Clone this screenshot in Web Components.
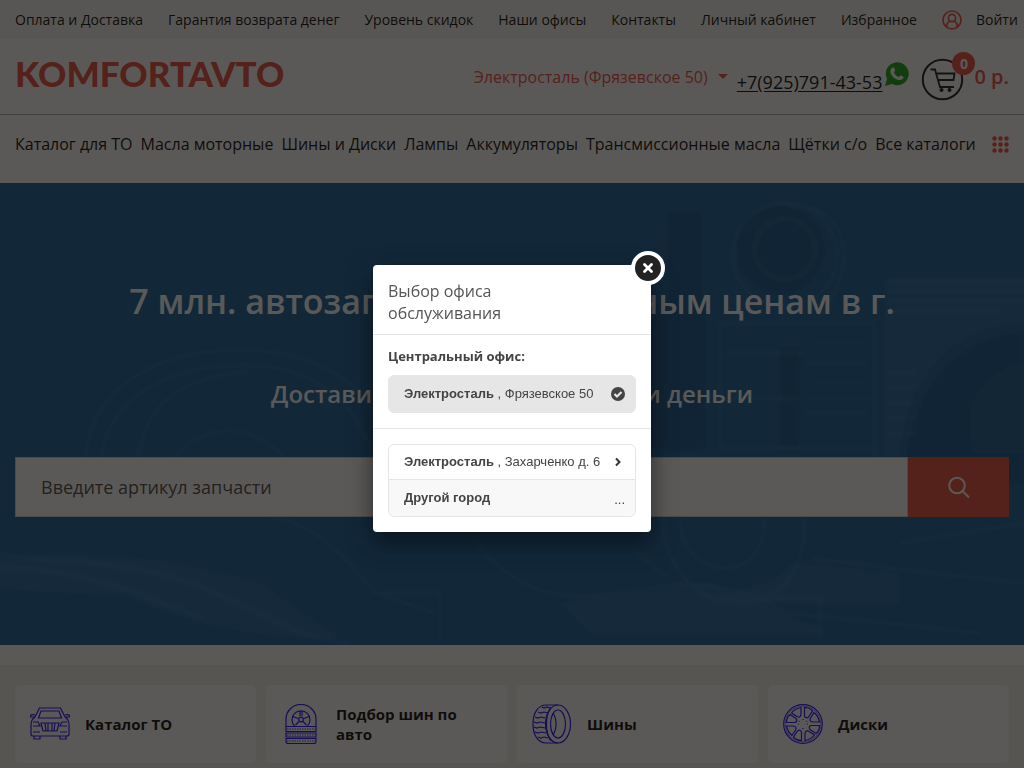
<!DOCTYPE html>
<html lang="ru">
<head>
<meta charset="utf-8">
<title>Komfortavto</title>
<style>
html, body { margin: 0; }
body { font-family: "Open Sans", "Liberation Sans", sans-serif; color: #000; background: #fff; overflow: hidden; }
</style>
</head>
<body>
<shop-page></shop-page>
<script>
const define = (name, html) => {
  const template = document.createElement('template');
  template.innerHTML = html;
  customElements.define(name, class extends HTMLElement {
    constructor() {
      super();
      this.attachShadow({ mode: 'open' }).append(template.content.cloneNode(true));
    }
  });
};

define('top-bar', `
<style>
:host { display: block; background: #f5f5f3; }
nav { display: flex; align-items: center; gap: 25px; height: 39px; padding: 0 15px; font-size: 14px; white-space: nowrap; }
a { color: #000; text-decoration: none; }
.login { display: flex; align-items: center; gap: 14px; }
svg { width: 20px; height: 20px; }
</style>
<nav>
<a href="#">Оплата и Доставка</a><a href="#">Гарантия возврата денег</a><a href="#">Уровень скидок</a><a href="#">Наши офисы</a><a href="#">Контакты</a><a href="#">Личный кабинет</a><a href="#">Избранное</a>
<a class="login" href="#"><svg viewBox="0 0 20 20" fill="none" stroke="#ec4438" stroke-width="1.700"><circle cx="10" cy="10" r="9"/><circle cx="10" cy="8" r="3.600"/><path d="M4.500 17c0-3.500 1.500-5 3.500-6M15.500 17c0-3.500-1.500-5-3.500-6"/></svg>Войти</a>
</nav>`);

define('cart-link', `
<style>
:host { display: block; }
a { display: flex; align-items: center; gap: 10px; color: #ec4438; font-size: 20px; font-weight: 600; line-height: 28px; text-decoration: none; white-space: nowrap; }
.icon { position: relative; display: block; width: 43px; height: 43px; }
svg { display: block; width: 43px; height: 43px; }
.badge { position: absolute; top: -6px; right: -11px; width: 23px; height: 23px; border-radius: 50%; background: #ec4438; color: #fff; font-size: 14px; font-weight: 700; line-height: 23px; text-align: center; }
.sum { padding-bottom: 6px; }
</style>
<a href="#"><span class="icon"><svg viewBox="0 0 43 43" fill="none" stroke="#10101c" stroke-width="2"><circle cx="21.500" cy="21.500" r="19.700"/><path d="M9.500 11.500h4.500l5 17.500h14" stroke-width="1.800"/><path d="M16 15.500h17.500l-1 6.500h-15" stroke-width="1.800"/><circle cx="20.500" cy="32" r="1"/><circle cx="28.500" cy="32" r="1"/></svg><span class="badge">0</span></span><span class="sum">0 р.</span></a>`);

define('site-header', `
<style>
:host { display: block; border-bottom: 1px solid #aaa; }
header { display: flex; align-items: center; height: 75px; padding: 0 15px; white-space: nowrap; }
.logo { margin-right: auto; padding-bottom: 8px; color: #ec4438; font: 900 35px/40px Lato, sans-serif; text-decoration: none; }
.city { display: flex; align-items: center; gap: 10px; color: #ec4438; font-size: 16px; text-decoration: none; }
.caret { border: 5px solid transparent; border-top-color: #ec4438; border-bottom: 0; }
.phone { margin: 10px 2px 0 9px; color: #000; font-size: 18px; line-height: 24px; text-underline-offset: 2px; }
.wa { width: 26px; height: 26px; margin: 0 11px 6px 0; }
cart-link { margin-top: 6px; }
</style>
<header>
<a class="logo" href="#">KOMFORTAVTO</a>
<a class="city" href="#">Электросталь (Фрязевское 50)<span class="caret"></span></a>
<a class="phone" href="#">+7(925)791-43-53</a>
<svg class="wa" viewBox="0 0 26 26"><path d="M1 25l2-7A11.500 11.500 0 1 1 8 23z" fill="#0fa00a"/><path d="M7 8c2-3 3-2 4 1 .5 1-1 1.500-1 2.500 1 2 2.500 3.500 4.500 4.500 1 0 1.500-2 2.500-1.500 3 1 3.500 2 1 4C12 21 4 13 7 8z" fill="#fff"/></svg>
<cart-link></cart-link>
</header>`);

define('catalog-nav', `
<style>
:host { display: block; }
nav { display: flex; align-items: center; gap: 8px; height: 68px; box-sizing: border-box; padding: 0 15px 10px; font-size: 16px; white-space: nowrap; }
a { color: #000; text-decoration: none; }
button { margin-left: auto; padding: 0; border: 0; background: none; }
svg { display: block; width: 17px; height: 17px; fill: #ec4438; }
</style>
<nav>
<a href="#">Каталог для ТО</a><a href="#">Масла моторные</a><a href="#">Шины и Диски</a><a href="#">Лампы</a><a href="#">Аккумуляторы</a><a href="#">Трансмиссионные масла</a><a href="#">Щётки с/о</a><a href="#">Все каталоги</a>
<button type="button" aria-label="Меню"><svg viewBox="0 0 17 17"><circle cx="2.500" cy="2.500" r="2.200"/><circle cx="8.500" cy="2.500" r="2.200"/><circle cx="14.500" cy="2.500" r="2.200"/><circle cx="2.500" cy="8.500" r="2.200"/><circle cx="8.500" cy="8.500" r="2.200"/><circle cx="14.500" cy="8.500" r="2.200"/><circle cx="2.500" cy="14.500" r="2.200"/><circle cx="8.500" cy="14.500" r="2.200"/><circle cx="14.500" cy="14.500" r="2.200"/></svg></button>
</nav>`);

define('search-hero', `
<style>
:host { display: grid; background: #0a5a9c; }
.art, .content { grid-area: 1 / 1; min-width: 0; }
.art { width: 100%; height: 100%; }
.content { position: relative; padding: 90px 15px 128px; text-align: center; color: #fff; }
h1 { margin: 0 0 50px; font-size: 34px; font-weight: 600; line-height: 56px; white-space: nowrap; }
p { margin: 0 0 48px; font-size: 24px; font-weight: 600; line-height: 30px; white-space: nowrap; }
form { display: flex; height: 60px; }
input { flex: 1; min-width: 0; box-sizing: border-box; padding: 0 25px; border: 1px solid #ccc; border-radius: 0; background: #fff; font: 18px "Open Sans", sans-serif; outline: 0; }
input::placeholder { color: #444; opacity: 1; }
button { flex: none; width: 101px; border: 0; padding: 0; background: #ec4438; display: grid; place-items: center; }
button svg { width: 22px; height: 22px; }
</style>
<svg class="art" viewBox="0 0 1024 462" preserveAspectRatio="xMidYMid slice" aria-hidden="true" fill="none" stroke="#fff">
<defs><filter id="soft"><feGaussianBlur stdDeviation="1.500"/></filter></defs>
<g filter="url(#soft)">
<g opacity=".05" stroke-width="3">
<path d="M84 290C84 205 155 167 240 167s150 45 150 115M100 290c0-70 60-106 140-108s130 50 130 100M137 285c5-70 50-90 110-97M165 290c20-45 80-60 120-15"/>
<path d="M0 370c40 10 120 5 190 30s110 60 160 60M0 385c70 0 130 20 200 50M260 330c60 10 90 50 115 80l60 20M470 350c40 60 90 70 150 60s90-20 170 20l190 20"/>
<circle cx="785" cy="72" r="52"/><circle cx="785" cy="66" r="30"/><path d="M790 22c60 0 70 60 30 110"/>
<path d="M662 330c0 60 40 90 80 90s70-40 60-90M680 335c0 30 20 50 45 50s40-20 40-50"/>
<path d="M720 140h155v180M720 140v125h150M725 170h80M805 180h65M725 215h75M805 230h65"/>
<path d="M810 375l120 15 94 10M900 360l124-20M380 410h60v50M720 415h100v40"/>
</g>
<g opacity=".04" fill="#fff" stroke="none"><path d="M885 95h139v45c-70 0-120 55-125 140h-14zM630 360c40 70 150 50 160 20l110 10v30H700zM0 375c100-10 170 0 260 25l80 55c-80 0-140-10-210-40L0 405zM970 230c10-40 54-50 54-50v90h-50zM560 420l150-20 120 50H590z"/></g>
<g opacity=".12" fill="#001830" stroke="none"><rect x="668" y="28" width="34" height="240"/><circle cx="780" cy="66" r="45"/><path d="M905 280c10-90 65-130 119-130v150H905zM620 120h85v145h-85zM780 165h20v100h-20z"/></g>
<g opacity=".05" stroke-width="2"><path d="M890 98h134M890 108h134M890 118h134M890 128h110M890 190h25M890 205h25M890 220h25M890 235h25M890 250h25M810 160h60M810 200h60M810 215h60"/></g>
</g></svg>
<div class="content">
<h1>7 млн. автозапчастей по честным ценам в г.</h1>
<p>Доставим и сэкономим время и деньги</p>
<form><input type="text" aria-label="Артикул запчасти" placeholder="Введите артикул запчасти"><button type="button" aria-label="Найти"><svg viewBox="0 0 22 22" fill="none" stroke="#fff" stroke-width="2"><circle cx="9" cy="9.500" r="7.800"/><path d="M14.500 15l6.500 6.500"/></svg></button></form>
</div>`);

define('catalog-card', `
<style>
:host { display: block; background: #fff; border-radius: 5px; }
a { display: flex; align-items: center; gap: 15px; min-height: 78px; box-sizing: border-box; padding: 10px 15px; color: #000; font-size: 15px; font-weight: 700; line-height: 20px; text-decoration: none; }
::slotted(svg) { flex: none; width: 40px; height: 40px; fill: none; stroke: #1800ff; stroke-width: 1.2; }
span { max-width: 130px; }
</style>
<a href="#"><slot name="icon"></slot><span><slot></slot></span></a>`);

define('catalog-grid', `
<style>
:host { display: block; margin-top: 20px; padding: 20px 15px; background: #f2f2ef; }
div { display: grid; grid-template-columns: repeat(4, 1fr); gap: 10px; }
</style>
<div>
<catalog-card><svg slot="icon" viewBox="0 0 40 40"><path d="M5 13L9.500 4h21L35 13M8.500 14L11 7h18l2.500 7zM5 13c-3 2-4 5-4 8v9c0 1 1 2 2 2h34c1 0 2-1 2-2v-9c0-3-1-6-4-8M5 11c-3-1-5 0-4.500 2H5M35 11c3-1 5 0 4.500 2H35M4 32v3h6v-3M30 32v3h6v-3M11 19h18l-2 8H13zM15 19l1 8M18 19v8M22 19v8M25 19l-1 8M3 18h5l2 4H3M37 18h-5l-2 4h7M3 28h7M30 28h7"/></svg>Каталог ТО</catalog-card>
<catalog-card><svg slot="icon" viewBox="0 0 40 40"><path d="M5 22V15a15 14.500 0 0 1 30 0v7M5 22.500h30v5H5zM5 29h30v4H5zM5 34.500h30v3q0 2-2 2H7q-2 0-2-2z"/><path d="M6 25h28M6 31h28M6 37h28" stroke-width=".8" stroke-dasharray="1.500 1"/><path d="M13.500 22a9 9 0 1 1 13 0"/><circle cx="20" cy="15.500" r="2.300"/><path d="M19 7v5M21 7v5M12 12.500l5 2M28 12.500l-5 2M14.500 21l3.500-3.500M25.500 21L22 17.500"/></svg>Подбор шин по авто</catalog-card>
<catalog-card><svg slot="icon" viewBox="0 0 40 40"><ellipse cx="26" cy="20" rx="12.500" ry="19"/><ellipse cx="26" cy="20" rx="7.500" ry="14"/><path d="M26 1H14C6 1 1 9 1 20s5 19 13 19h12M21 9c4 6 4 16 0 22M10 3l2 1 3-1 3 1M6 8l3 1 3-1 4 1M3 13l3 1 3-1 4 1M2 18l3 1 3-1 5 1M2 23l3 1 3-1 5 1M3 28l3 1 3-1 5 1M6 33l3 1 3-1 4 1M19 3c-6 8-6 26 0 34"/></svg>Шины</catalog-card>
<catalog-card><svg slot="icon" viewBox="0 0 40 40"><circle cx="20" cy="20" r="19.300"/><circle cx="20" cy="20" r="17.800" stroke-width=".5"/><path d="M21.500 3.500q5 0 8 3.500l-4 6q-3 2-4-1zM31 8.500q4 3 5.500 9.500h-6q-5 0-3-4z"/><g transform="rotate(90 20 20)"><path d="M21.500 3.500q5 0 8 3.500l-4 6q-3 2-4-1zM31 8.500q4 3 5.500 9.500h-6q-5 0-3-4z"/></g><g transform="rotate(180 20 20)"><path d="M21.500 3.500q5 0 8 3.500l-4 6q-3 2-4-1zM31 8.500q4 3 5.500 9.500h-6q-5 0-3-4z"/></g><g transform="rotate(270 20 20)"><path d="M21.500 3.500q5 0 8 3.500l-4 6q-3 2-4-1zM31 8.500q4 3 5.500 9.500h-6q-5 0-3-4z"/></g><path d="M20 15v1M24 17l-.5.500M25 20h-1M20 24v1M16 17l.5.500M15 20h1"/></svg>Диски</catalog-card>
</div>`);

define('office-row', `
<style>
:host { display: block; color: #444; }
a { display: flex; align-items: center; justify-content: space-between; box-sizing: border-box; height: var(--row-height, 36px); padding: 0 9px 0 15px; color: inherit; font: 13px/20px "Liberation Sans", sans-serif; text-decoration: none; white-space: nowrap; }
</style>
<a href="#"><span><slot></slot></span><slot name="mark"></slot></a>`);

define('office-dialog', `
<style>
:host { position: fixed; inset: 0; box-sizing: border-box; padding-top: 29px; display: grid; place-items: center; background: rgba(21, 18, 16, .7); }
dialog { position: relative; box-sizing: border-box; width: 278px; margin: 0; padding: 0; border: 0; border-radius: 4px; background: #fff; color: #444; box-shadow: 0 10px 25px rgba(0, 0, 0, .5); }
h2 { margin: 0; padding: 15px 100px 10px 15px; border-bottom: 1px solid #e5e5e5; color: #555; font-size: 16px; font-weight: 400; line-height: 22px; }
section { padding: 10px 15px 15px; border-bottom: 1px solid #e5e5e5; }
section + section { padding-top: 15px; border: 0; }
h3 { margin: 0 0 8px; font-size: 13px; font-weight: 700; line-height: 22px; }
.current { border: 1px solid #e6e6e6; border-radius: 6px; background: #e6e6e6; }
.list { border: 1px solid #e5e5e5; border-radius: 6px; overflow: hidden; }
.near { --row-height: 34px; border-bottom: 1px solid #e5e5e5; }
.other { background: #f8f8f8; }
.mark { display: block; width: 16px; height: 16px; }
.dots { padding: 3px 1px 0 0; }
.close { position: absolute; top: -14px; right: -14px; width: 34px; height: 34px; padding: 0; border: 4px solid #fff; border-radius: 50%; background: #222; display: grid; place-items: center; }
.close svg { width: 12px; height: 12px; }
</style>
<dialog open aria-labelledby="t">
<h2 id="t">Выбор офиса обслуживания</h2>
<section><h3>Центральный офис:</h3>
<office-row class="current"><b>Электросталь</b> , Фрязевское 50<svg class="mark" slot="mark" viewBox="0 0 16 16"><circle cx="8" cy="8" r="7" fill="#444"/><path d="M4.500 8l2.500 2.500L11.500 6" fill="none" stroke="#e6e6e6" stroke-width="2.200"/></svg></office-row></section>
<section><div class="list">
<office-row class="near"><b>Электросталь</b> , Захарченко д. 6<svg class="mark" slot="mark" viewBox="0 0 16 16"><path d="M6 4.500L9.500 8 6 11.500" fill="none" stroke="#333" stroke-width="2"/></svg></office-row>
<office-row class="other"><b>Другой город</b><span class="dots" slot="mark">...</span></office-row>
</div></section>
<button class="close" type="button" aria-label="Закрыть"><svg viewBox="0 0 12 12"><path d="M2.500 2.500l7 7M9.500 2.500l-7 7" stroke="#fff" stroke-width="2.800" stroke-linecap="round"/></svg></button>
</dialog>`);

define('shop-page', `
<style>
:host { display: flex; flex-direction: column; height: 100vh; overflow: hidden; }
top-bar, site-header, catalog-nav, search-hero { flex: none; }
catalog-grid { flex: 1 0 auto; }
</style>
<top-bar></top-bar><site-header></site-header><catalog-nav></catalog-nav><search-hero></search-hero><catalog-grid></catalog-grid>
<office-dialog></office-dialog>`);
</script>
</body>
</html>
